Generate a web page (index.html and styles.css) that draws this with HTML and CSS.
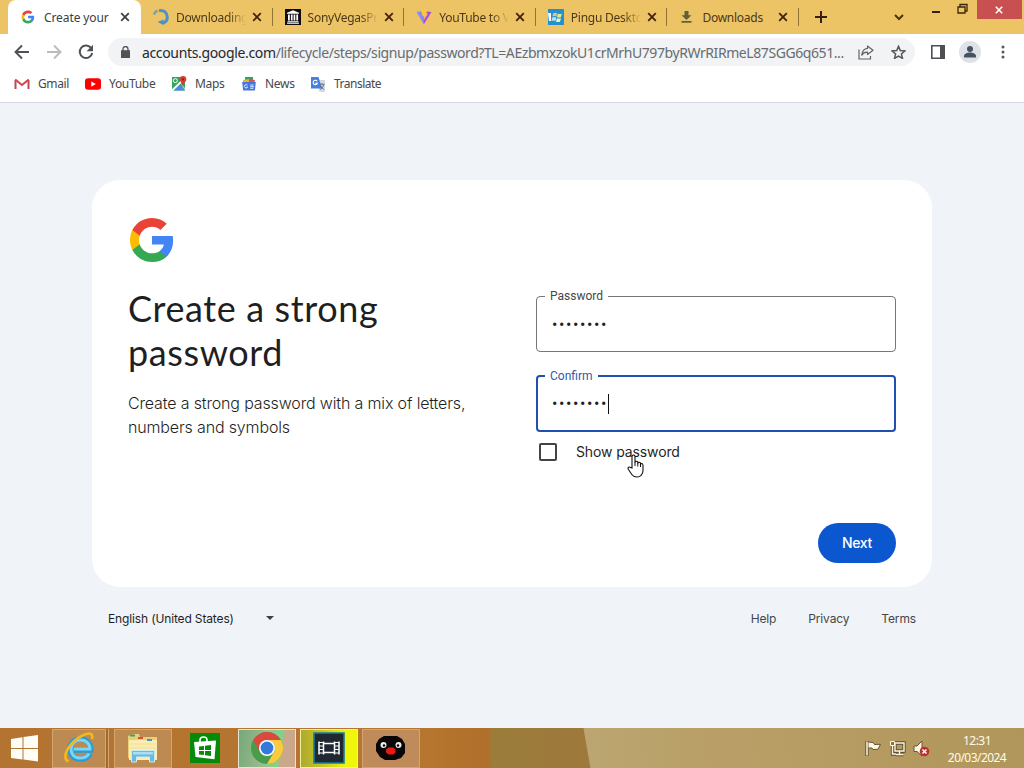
FILE: index.html
```
<!DOCTYPE html>
<html lang="en">
<head>
    <meta charset="UTF-8">
    <meta name="viewport" content="width=device-width, initial-scale=1.0">
    <title>Create your Google Account</title>
    <link rel="stylesheet" href="styles.css">
</head>
<body>
    <!-- shared shapes -->
    <svg class="defs" width="0" height="0">
        <symbol id="google" viewBox="0 0 48 48">
            <path fill="#4285F4" d="M45.12 24.5c0-1.56-.14-3.06-.4-4.5H24v8.51h11.84c-.51 2.75-2.06 5.08-4.39 6.64v5.52h7.11c4.16-3.83 6.56-9.47 6.56-16.17z"/>
            <path fill="#34A853" d="M24 46c5.94 0 10.92-1.97 14.56-5.33l-7.11-5.52c-1.97 1.32-4.49 2.1-7.45 2.1-5.73 0-10.58-3.87-12.31-9.07H4.34v5.7C7.96 41.07 15.4 46 24 46z"/>
            <path fill="#FBBC05" d="M11.69 28.18C11.25 26.86 11 25.45 11 24s.25-2.86.69-4.18v-5.7H4.34C2.85 17.09 2 20.45 2 24s.85 6.91 2.34 9.88l7.35-5.7z"/>
            <path fill="#EA4335" d="M24 10.75c3.23 0 6.13 1.11 8.41 3.29l6.31-6.31C34.91 4.18 29.93 2 24 2 15.4 2 7.96 6.93 4.34 14.12l7.35 5.7c1.73-5.2 6.58-9.07 12.31-9.07z"/>
        </symbol>
        <symbol id="close" viewBox="0 0 10 10">
            <path d="M1.2 1.2l7.6 7.6M8.8 1.2L1.2 8.8" fill="none" stroke="currentColor" stroke-width="1.8"/>
        </symbol>
    </svg>

    <header class="tab-bar">
        <div class="tab active">
            <svg class="tab-icon"><use href="#google"/></svg>
            <span class="tab-title">Create your</span>
            <svg class="tab-close"><use href="#close"/></svg>
        </div>
        <div class="tab">
            <svg class="tab-icon" viewBox="0 0 16 16" fill="none">
                <path d="M.8 5.500A8 8 0 0 1 4.600 1.700" stroke="#7c9fae" stroke-width="2.400"/>
                <path d="M6 1.700c5-1 8.300 2.200 8.300 6.300 0 3-2 5.500-4.600 6.400" stroke="#4a92c9" stroke-width="3"/>
                <path d="M4.600 13l5.900-2.500V16z" fill="#4a92c9"/>
            </svg>
            <span class="tab-title">Downloading</span>
            <svg class="tab-close"><use href="#close"/></svg>
        </div>
        <div class="tab">
            <svg class="tab-icon" viewBox="0 0 16 16">
                <path fill="#0d0d10" d="M0 0h16v16H0z"/>
                <path fill="#fff" d="M8 1.200l6 2.500v1H2v-1zM3 5.600h1.800v6H3zM5.900 5.600h1.700v6H5.900zM8.600 5.600h1.700v6H8.600zM11.300 5.600h1.800v6h-1.800zM2.500 12.300h11v.9h-11zM2 13.800h12v1H2z"/>
            </svg>
            <span class="tab-title">SonyVegasPr</span>
            <svg class="tab-close"><use href="#close"/></svg>
        </div>
        <div class="tab">
            <svg class="tab-icon" viewBox="0 0 16 16">
                <path fill="#8a8cf0" d="M.5 3l4.500-.7L8.500 9l-.7 6.500z"/>
                <path fill="#a94be0" d="M15.500 3l-4.500-.5L7.800 9v6.500z"/>
                <path fill="#fcc93a" d="M6 1l5-.8-1 4.200 2 .2L8 11l.4-4.500-2 .3z"/>
            </svg>
            <span class="tab-title">YouTube to V</span>
            <svg class="tab-close"><use href="#close"/></svg>
        </div>
        <div class="tab">
            <svg class="tab-icon" viewBox="0 0 16 16">
                <path fill="#2192cf" d="M0 0h16v16H0z"/>
                <path fill="#fff" d="M0 4h3v8H1z"/>
                <path fill="#f6b98e" d="M5 4.500q2-1.500 4-.3L8.500 7.500q-2-1-4 0z"/>
                <path fill="#d1ee9a" d="M9.800 4.600q2 1 4 0L13 8.300q-2 .8-4 0z"/>
                <path fill="#b4e4fd" d="M4.300 8.500q2-1 4 0L7.500 12q-2-1-4 0z"/>
                <path fill="#fff2a0" d="M9 9.200q2 .9 4 0L12 12.700q-2 .8-4 0z"/>
            </svg>
            <span class="tab-title">Pingu Deskto</span>
            <svg class="tab-close"><use href="#close"/></svg>
        </div>
        <div class="tab">
            <svg class="tab-icon" viewBox="0 0 16 16">
                <path fill="#5f6043" d="M5.500 2h4v4.200h3L7.500 11 2.500 6.200h3zM2.500 12h10v1.800h-10z"/>
            </svg>
            <span class="tab-title">Downloads</span>
            <svg class="tab-close"><use href="#close"/></svg>
        </div>
        <svg class="new-tab" width="12" height="12" viewBox="0 0 12 12"><path d="M6 0v12M0 6h12" stroke="#35200e" stroke-width="2"/></svg>
        <svg class="tab-search" width="10" height="7" viewBox="0 0 10 7"><path d="M1 1l4 4 4-4" fill="none" stroke="#4b3511" stroke-width="2"/></svg>
        <div class="window-controls">
            <svg width="8" height="20" viewBox="0 0 8 20"><path d="M0 12h8" stroke="#3a1d08" stroke-width="2"/></svg>
            <svg width="11" height="20" viewBox="0 0 11 20"><path d="M1 7h7v6H1zM3 7V4.500h7V11H8" fill="none" stroke="#3a250c" stroke-width="1.300"/></svg>
            <span class="window-close"><svg width="8" height="8" viewBox="0 0 10 10"><path d="M1 1l8 8M9 1L1 9" stroke="#fff" stroke-width="2"/></svg></span>
        </div>
    </header>

    <nav class="toolbar">
        <svg class="nav-icon" viewBox="0 0 16 16"><path d="M15 8H2M8 1.500L1.500 8 8 14.500" fill="none" stroke="#4e5155" stroke-width="1.900"/></svg>
        <svg class="nav-icon" viewBox="0 0 16 16"><path d="M1 8h13M8 1.500L14.500 8 8 14.500" fill="none" stroke="#babcbe" stroke-width="1.900"/></svg>
        <svg class="nav-icon" viewBox="0 0 16 16"><path d="M13.300 4.300A6.300 6.300 0 1 0 14.200 9" fill="none" stroke="#4e5155" stroke-width="2"/><path d="M15 .8v6.400H8.600z" fill="#4e5155"/></svg>
        <div class="address">
            <svg width="9" height="12" viewBox="0 0 9 12"><path d="M0 4.200h9V12H0z" fill="#505358"/><path d="M2 5V3a2.500 2.500 0 0 1 5 0v2" fill="none" stroke="#505358" stroke-width="1.300"/></svg>
            <span class="url"><b>accounts.google.com</b>/lifecycle/steps/signup/password?TL=AEzbmxzokU1crMrhU797byRWrRIRmeL87SGG6q651...</span>
            <svg class="share" width="16" height="15" viewBox="0 0 16 15" fill="none" stroke="#5f6368" stroke-width="1.200"><path d="M1 4.500V14h11.500v-3"/><path d="M9.500 1l5.500 4.200-5.500 4.200V7.200Q5.500 7 3.800 10.300 4.200 4 9.500 3.400z" stroke-linejoin="round"/></svg>
            <svg class="star" width="15" height="14" viewBox="0 0 15 14"><path d="M7.500 1.300l1.800 4.200 4.600.4-3.500 3 1.100 4.500-4-2.400-4 2.400 1.100-4.500-3.500-3 4.600-.4z" fill="none" stroke="#54575b" stroke-width="1.500"/></svg>
        </div>
        <svg class="side-panel" width="14" height="14" viewBox="0 0 14 14"><path d="M.8.8h12.400v12.400H.8z" fill="none" stroke="#4d4f53" stroke-width="1.600"/><path fill="#4d4f53" d="M9 0h5v14H9z"/></svg>
        <svg class="profile" width="22" height="22" viewBox="0 0 22 22"><circle cx="11" cy="11" r="11" fill="#dee2e8"/><circle cx="11" cy="8" r="3" fill="#465264"/><path d="M5 16.500v-1.500c0-2.200 3-3.500 6-3.500s6 1.300 6 3.500v1.500z" fill="#465264"/></svg>
        <svg class="menu" width="4" height="14" viewBox="0 0 4 14" fill="#54575b"><circle cx="2" cy="2" r="1.500"/><circle cx="2" cy="7" r="1.500"/><circle cx="2" cy="12" r="1.500"/></svg>
    </nav>

    <nav class="bookmarks">
        <a class="bookmark gmail"><svg viewBox="0 0 16 16"><path d="M1.500 13V4" stroke="#b64c55" stroke-width="2"/><path d="M14.500 13V4" stroke="#b64c55" stroke-width="2"/><path d="M1.200 3.500L8 9l6.800-5.500" fill="none" stroke="#d34646" stroke-width="2.100"/></svg>Gmail</a>
        <a class="bookmark youtube"><svg viewBox="0 0 16 16"><rect y="2.300" width="16" height="11.500" rx="3" fill="#f00"/><path d="M6.300 5.500l4.500 2.600-4.500 2.600z" fill="#fff"/></svg>YouTube</a>
        <a class="bookmark maps"><svg viewBox="0 0 16 16"><path fill="#2fa75c" d="M1 1h13v13.500H1z"/><path fill="#4e8ae5" d="M8 8.500l6 6H3z"/><path fill="#c8cbd0" d="M9 7l5 5v2.500z"/><path d="M1 14.500L13 3" stroke="#fff" stroke-width="1.800"/><circle cx="4.300" cy="4.600" r="2" fill="none" stroke="#fff"/><path d="M12 0a3.300 3.300 0 0 1 3.300 3.400C15.300 5.800 12.600 6.500 12 10c-.6-3.500-3.300-4.200-3.300-6.600A3.300 3.300 0 0 1 12 0z" fill="#d93e36"/><circle cx="12" cy="3.300" r="1.100" fill="#7d211d"/></svg>Maps</a>
        <a class="bookmark news"><svg viewBox="0 0 16 16"><path fill="#3e9e5f" d="M4 1h8v5H4z"/><path fill="#e8b438" d="M2 4l7-1v5H2z"/><path fill="#d8564b" d="M8 3l6 1-1 4H8z"/><path fill="#4278dd" d="M1.200 6h13.600l-.9 8.500H2.100z"/><path d="M6.500 9.200a1.700 1.700 0 1 0 .1 2H5.300M9.300 9h3.200M9.300 10.700h3.600M9.300 12.300h3" stroke="#e5edff" fill="none"/></svg>News</a>
        <a class="bookmark translate"><svg viewBox="0 0 16 16"><path fill="#d5d8dd" d="M6 4h9v12H9.500z"/><path fill="#4480df" d="M1 1h7.500l3.500 11.500H1z"/><path d="M7.200 5.200a2.200 2.200 0 1 0 .2 2.100H5.300" stroke="#fff" stroke-width="1.100" fill="none"/><path d="M9.500 8.300h5M12 7.300v1M13.800 8.500q-1 3.500-3.500 5M10.500 9.500q1.200 2.500 3.500 4" stroke="#66758a" fill="none"/></svg>Translate</a>
    </nav>

    <main class="page">
        <section class="card">
            <svg class="logo"><use href="#google"/></svg>
            <div class="columns">
                <div class="intro">
                    <h1>Create a strong password</h1>
                    <p>Create a strong password with a mix of letters, numbers and symbols</p>
                </div>
                <div class="form">
                    <fieldset class="field">
                        <legend>Password</legend>
                        <span class="dots">••••••••</span>
                    </fieldset>
                    <fieldset class="field focused">
                        <legend>Confirm</legend>
                        <span class="dots">••••••••</span><span class="caret"></span>
                    </fieldset>
                    <div class="show-password">
                        <span class="checkbox"></span>
                        <span class="show-label">Show password
                            <svg class="pointer" width="18" height="24" viewBox="0 0 18 24"><path d="M5 14V2.500Q5 1 6.500 1T8 2.500V9v-.8q.2-1 1.400-1t1.400 1V10v-.8q.2-1 1.300-1t1.400 1V11v-.6q.2-.9 1.200-.9T16 11v5.500q0 3-2 5Q12.700 23 10 23q-3.500 0-5.200-2.500L1.300 15.200q-.7-1.300.3-2 1-.6 2 .4z" fill="#fff" stroke="#111" stroke-width="1.100"/><path d="M8 8.500V12M10.800 9.500v3M13.500 10.500v2.500" stroke="#111"/></svg>
                        </span>
                    </div>
                </div>
            </div>
            <div class="actions"><button class="next">Next</button></div>
        </section>
        <footer class="footer">
            <span class="language">English (United States)</span>
            <span class="arrow"></span>
            <div class="links"><a>Help</a><a>Privacy</a><a>Terms</a></div>
        </footer>
    </main>

    <div class="taskbar">
        <svg class="start" width="27" height="27" viewBox="0 0 27 27" fill="#fffdf6"><path d="M0 4l11.500-1.800V13H0zM12.500 2L27 0v13H12.500zM0 14h11.500v10.500L0 23zM12.500 14H27v12.500l-14.500-2z"/></svg>
        <div class="task ie">
            <svg width="32" height="32" viewBox="0 0 32 32" fill="none"><path d="M27 21.500Q24.500 27 17.500 27C10.500 27 7 22.500 7 17S11 7 17.500 7 28 12 28 18H11" stroke="#2a9bd4" stroke-width="5.500"/><path d="M26 21.500Q23.500 26 17.500 26C11 26 8 22 8 17S12 8 17.500 8 27 12 27 17H11" stroke="#79d7f5" stroke-width="3"/><path d="M5.500 29.500C-3 26 7 9 20 3.200 26 .5 30.500 1 29 7" stroke="#f2b91f" stroke-width="2.600"/></svg>
        </div>
        <div class="task explorer">
            <svg width="32" height="32" viewBox="0 0 32 32"><path fill="#e7cf7b" d="M1 4l5-2h6l1 3h17v21H1z"/><path fill="#fbedb0" d="M2 8h28v20H2z"/><path fill="#3fa656" d="M3 2.500h5v2H3z"/><path fill="#d84f3d" d="M11 5h5v2h-5z"/><path fill="#4a92c9" d="M20 7h5v2h-5z"/><path d="M3 12h26M3 16h26" stroke="#f5dd91"/><path fill="#6db9dc" stroke="#c8edf7" d="M4.500 18.500h23V30h-5v-5h-13v5h-5z"/><path fill="#a8dff2" d="M6 20h20v2.500H6z"/></svg>
        </div>
        <div class="store">
            <svg width="30" height="30" viewBox="0 0 30 30"><path fill="#058a09" d="M0 0h30v30H0z"/><path d="M10 10V7q0-3 3.500-3T17 7v3" fill="none" stroke="#fff" stroke-width="1.600"/><path fill="#fff" d="M4 9l22-1.500-1.500 18.800L5.500 24z"/><path fill="#058a09" d="M9 13.500l5-.6v4H9zM15 12.800l6-.8v4.900h-6zM9 18h5v4l-5-.6zM15 18h6v5l-6-.8z"/></svg>
        </div>
        <div class="task chrome">
            <svg width="34" height="34" viewBox="0 0 34 34"><circle cx="17" cy="17" r="16" fill="#4a9c4d"/><path fill="#dc483d" d="M3.200 9a16 16 0 0 1 27.700 0H17a8 8 0 0 0-7 12z"/><path fill="#fccb3c" d="M30.900 9A16 16 0 0 1 17 33l7-12a8 8 0 0 0-7-12z"/><circle cx="17" cy="17" r="8" fill="#fff"/><circle cx="17" cy="17" r="6.400" fill="#3478dc"/></svg>
        </div>
        <div class="task vegas">
            <svg width="32" height="32" viewBox="0 0 32 32" fill="none"><path fill="#202932" stroke="#157da1" stroke-width="1.600" d="M1 1h30v30H1z"/><path d="M6 9.500v13M10.500 9.500v13M21.500 9.500v13M26 9.500v13M10.500 11.500h11M10.500 20.500h11" stroke="#fff" stroke-width="1.500"/><path d="M6 10.500h4.500M6 14h4.500M6 17.500h4.500M6 21h4.500M21.500 10.500H26M21.500 14H26M21.500 17.500H26M21.500 21H26" stroke="#fff" stroke-width="1.200"/></svg>
        </div>
        <div class="task pingu">
            <svg width="30" height="26" viewBox="0 0 30 26"><path fill="#080606" d="M8 1h13l5 3 3 5v9l-4 5-6 2H9l-5-3-4-6V9l3-5z"/><circle cx="7.500" cy="10" r="3" fill="#e8eee5"/><circle cx="22.500" cy="10" r="3" fill="#e8eee5"/><circle cx="8" cy="10.500" r="1.200"/><circle cx="22" cy="10.500" r="1.200"/><path fill="#e71b12" d="M12.500 12.500h5l2 2v3l-2 2h-5l-2.500-2v-3z"/></svg>
        </div>
        <div class="tray">
            <svg width="17" height="17" viewBox="0 0 17 17"><path d="M2 1v15" stroke="#66543a" stroke-width="3.400"/><path d="M3 2l5 .5 1.500 2 6-.2-2.500 5-5 .2-1-1.500H3z" fill="#fff8df" stroke="#66543a"/><path d="M2 1.500v14" stroke="#fff8df" stroke-width="1.500"/></svg>
            <svg width="17" height="17" viewBox="0 0 17 17" fill="none"><path d="M6 3h9v8H6zM10.500 11v3M7 14.500h7.500M3.500 5v9H7" stroke="#5d4e35" stroke-width="3.300"/><path d="M6 3h9v8H6zM10.500 11v3M7 14.500h7.500M3.500 5v9H7" stroke="#fff8df" stroke-width="1.400"/><path d="M1.500 1.500h4v4h-4z" fill="#8b7649" stroke="#fff8df"/></svg>
            <svg width="17" height="17" viewBox="0 0 17 17"><path d="M1 6h3l5-5v15l-5-4.500H1z" fill="#fff8df" stroke="#66543a"/><circle cx="11.500" cy="11.500" r="4.800" fill="#c42d2e"/><path d="M9.500 9.500l4 4M13.500 9.500l-4 4" stroke="#fff" stroke-width="1.500"/></svg>
        </div>
        <div class="clock"><span>12:31</span><span>20/03/2024</span></div>
    </div>
</body>
</html>
```
FILE: styles.css
```
* {
    box-sizing: border-box;
}
body {
    margin: 0;
    width: 1024px;
    height: 768px;
    overflow: hidden;
    display: flex;
    flex-direction: column;
    font-family: "Noto Sans", "Open Sans", sans-serif;
    background: #fff;
}
svg {
    display: block;
    flex-shrink: 0;
}
.defs {
    position: absolute;
}

/* Browser tabs */
.tab-bar {
    height: 34px;
    flex-shrink: 0;
    display: flex;
    align-items: center;
    padding-left: 8px;
    background: #edc465;
}
.tab {
    width: 131.600px;
    height: 34px;
    flex-shrink: 0;
    display: flex;
    align-items: center;
    padding-left: 13px;
    color: #4b3918;
    font-size: 12px;
}
.tab.active {
    width: 133px;
    background: #fff;
    border-radius: 8px 8px 0 0;
    color: #3c4043;
}
.tab:not(.active) {
    padding-left: 12px;
    background: linear-gradient(#927333, #927333) right 8px / 1px 18px no-repeat;
}
.tab-icon {
    width: 16px;
    height: 16px;
}
.tab.active .tab-icon {
    width: 14px;
    margin-right: 2px;
}
.tab-title {
    width: 70px;
    margin: 0 6px 0 7px;
    white-space: nowrap;
    letter-spacing: -0.250px;
    -webkit-mask-image: linear-gradient(90deg, #000 75%, transparent 100%);
    mask-image: linear-gradient(90deg, #000 75%, transparent 100%);
}
.active .tab-title {
    letter-spacing: -0.100px;
}
.tab:nth-child(1) .tab-title,
.tab:nth-child(6) .tab-title {
    -webkit-mask-image: none;
    mask-image: none;
}
.tab-close {
    width: 10px;
    height: 10px;
    color: #42200f;
}
.active .tab-close {
    color: #3f4246;
}
.new-tab {
    margin-left: 16px;
}
.tab-search {
    margin-left: 67px;
}
.window-controls {
    display: flex;
    align-self: flex-start;
    margin-left: 28px;
}
.window-controls svg + svg {
    margin: 0 9px 0 17px;
}
.window-close {
    width: 45px;
    height: 19px;
    display: flex;
    align-items: center;
    justify-content: center;
    background: #c95050;
}

/* Toolbar */
.toolbar {
    height: 36px;
    flex-shrink: 0;
    display: flex;
    align-items: center;
    padding-left: 14px;
}
.nav-icon {
    width: 16px;
    height: 16px;
    margin-right: 16px;
}
.address {
    width: 807px;
    height: 28px;
    margin-left: -2px;
    padding-left: 13px;
    display: flex;
    align-items: center;
    background: #f1f3f4;
    border-radius: 14px;
}
.url {
    width: 701px;
    margin-left: 12px;
    font-size: 14px;
    letter-spacing: -0.420px;
    color: #686c70;
    white-space: nowrap;
}
.url b {
    font-weight: normal;
    color: #25282c;
    letter-spacing: -0.350px;
}
.share {
    margin-left: 15px;
}
.star {
    margin-left: 17px;
}
.side-panel {
    margin-left: 16px;
}
.profile {
    margin-left: 14px;
}
.menu {
    margin-left: 20px;
}

.bookmarks {
    height: 33px;
    flex-shrink: 0;
    display: flex;
    align-items: center;
    padding: 0 0 5px 14px;
    border-bottom: 1px solid #d6dae2;
    color: #45484c;
    font-size: 12px;
    letter-spacing: -0.300px;
}
.bookmark {
    display: flex;
    align-items: center;
}
.bookmark svg {
    width: 16px;
    height: 16px;
    margin-right: 8px;
}
.gmail {
    width: 71px;
    letter-spacing: -0.400px;
}
.youtube { width: 86px; }
.maps { width: 70px; }
.news { width: 69px; }
.translate { letter-spacing: -0.500px; }

/* Sign-up page */
.page {
    height: 625px;
    flex-shrink: 0;
    padding: 77px 92px 0;
    background: #f0f3f8;
    color: #1f1f1f;
    font-family: Inter, Roboto, sans-serif;
}
.card {
    height: 407px;
    padding: 36px;
    background: #fff;
    border-radius: 28px;
}
.logo {
    width: 48px;
    height: 48px;
}
.columns {
    display: flex;
    gap: 48px;
    height: 259px;
}
.intro {
    width: 360px;
    padding-top: 22px;
}
h1 {
    margin: 0;
    font-family: Lato, sans-serif;
    font-size: 36px;
    font-weight: normal;
    line-height: 44px;
    letter-spacing: 0.600px;
}
.intro p {
    width: 350px;
    margin: 17px 0 0;
    font-size: 16px;
    line-height: 24px;
    font-weight: 300;
    letter-spacing: -0.150px;
}
.form {
    width: 360px;
    padding-top: 24px;
}
.field {
    height: 64px;
    margin: 0 0 16px;
    padding: 0 0 6px 8px;
    border: 1px solid #747775;
    border-radius: 4px;
    min-width: 0;
    display: flex;
    align-items: center;
}
.field legend {
    height: 16px;
    padding: 0 5px;
    font-family: Roboto, sans-serif;
    font-size: 12px;
    line-height: 16px;
    color: #444746;
}
.dots {
    margin-left: 7px;
    font-family: Roboto, sans-serif;
    font-size: 16px;
    line-height: 40px;
    letter-spacing: 1.600px;
}
.field.focused {
    padding-left: 7px;
    border: 2px solid #2250ae;
}
.focused legend {
    color: #3159ad;
}
.caret {
    width: 1px;
    height: 20px;
    background: #111;
}
.show-password {
    display: flex;
    align-items: center;
    height: 40px;
    margin-top: -16px;
    padding-left: 3px;
}
.checkbox {
    width: 18px;
    height: 18px;
    border: 2px solid #444;
    border-radius: 2px;
}
.show-label {
    position: relative;
    margin-left: 19px;
    padding-bottom: 2px;
    font-size: 14px;
    letter-spacing: -0.120px;
}
/* hand cursor floats over the label */
.pointer {
    position: absolute;
    left: 51px;
    top: 11px;
}
.actions {
    display: flex;
    justify-content: flex-end;
}
.next {
    width: 78px;
    height: 40px;
    padding: 0 0 1px;
    border: 0;
    border-radius: 20px;
    background: #0b57d0;
    color: #fff;
    font-family: Inter, sans-serif;
    font-size: 14px;
    font-weight: 500;
    letter-spacing: -0.300px;
}
.footer {
    display: flex;
    align-items: center;
    height: 62px;
    padding: 0 16px;
    font-size: 12px;
    letter-spacing: -0.140px;
}
.language {
    width: 158px;
}
.arrow {
    border: 4.500px solid transparent;
    border-top-color: #3d4043;
    border-bottom: 0;
}
.links {
    display: flex;
    gap: 32px;
    margin-left: auto;
    color: #444746;
}

/* Windows taskbar */
.taskbar {
    height: 40px;
    flex-shrink: 0;
    display: flex;
    align-items: center;
    padding-left: 11px;
    color: #fffbea;
    background:
        linear-gradient(80deg, transparent 581px, #bba570 582px, #b99f67 70%, #b1965b),
        linear-gradient(90deg, #b37432 0, #b6762f 430px, #b06e2a 486px, #9b7d3b 494px, #9e793c 584px);
}
.start {
    margin-right: 14px;
}
.task {
    width: 58px;
    height: 39px;
    display: flex;
    align-items: center;
    justify-content: center;
    border: 1px solid #d3a570;
    background: #bd8a52;
}
.ie {
    width: 54px;
    margin-right: 8px;
    box-shadow: 2px 0 #a36b2b, 3px 0 #d3a570;
}
.store {
    margin: 0 18px;
}
.chrome {
    border-color: #e5e4d5;
    background: linear-gradient(100deg, #75a878, #9ebd92 50%, #7ed486 70%, #cba78c 76%);
}
.vegas {
    margin: 0 4px;
    border-color: #eef3a0;
    background: linear-gradient(90deg, #afa92f, #c5c91f 40%, #eff50b 80%);
}
.pingu {
    background: #c08b5b;
}
.tray {
    display: flex;
    gap: 7px;
    margin-left: 445px;
}
.clock {
    width: 70px;
    margin-left: 12px;
    display: flex;
    flex-direction: column;
    align-items: center;
    font-size: 12px;
    line-height: 17px;
    letter-spacing: -0.550px;
    padding-top: 2px;
    white-space: nowrap;
}
```
